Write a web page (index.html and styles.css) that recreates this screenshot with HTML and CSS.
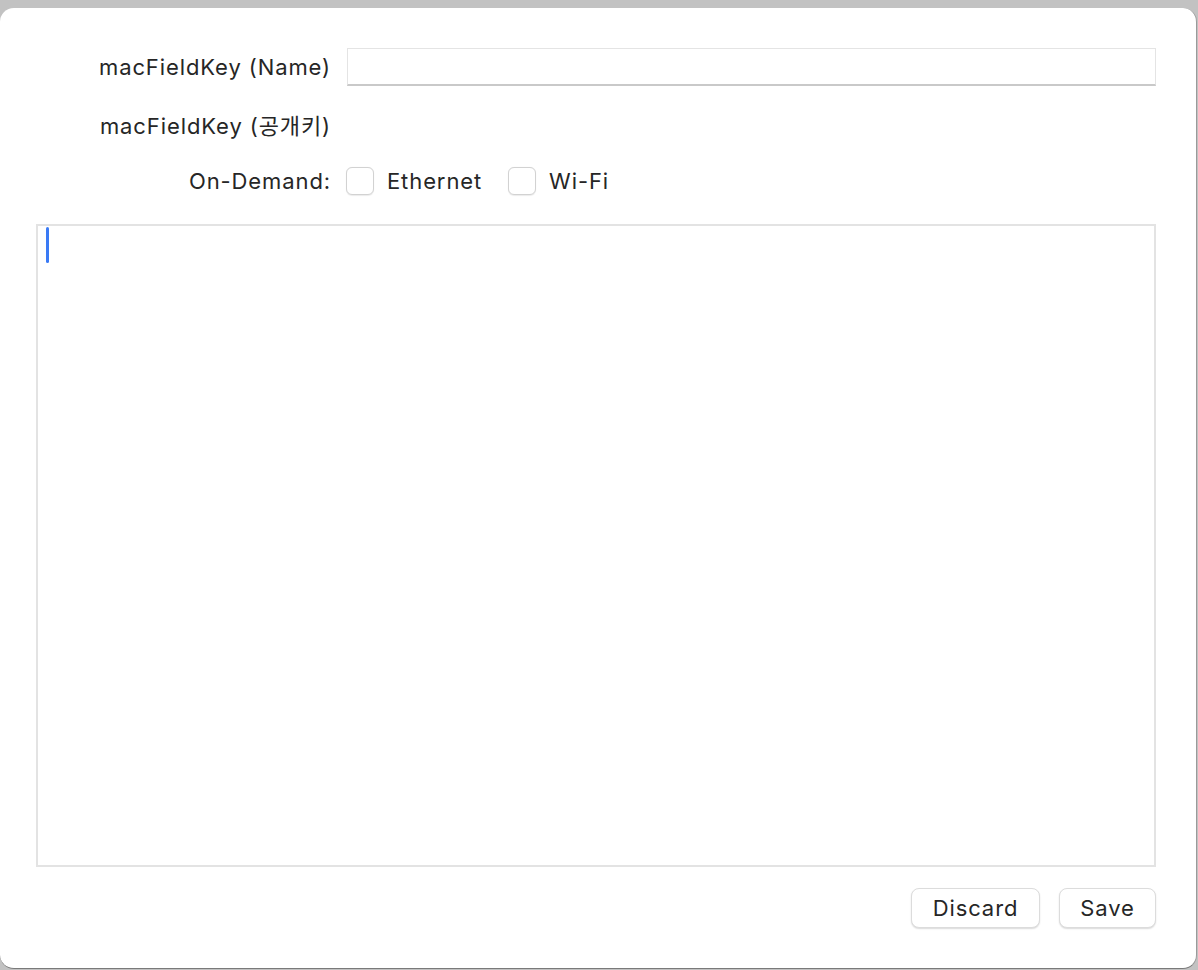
FILE: index.html
```html
<!DOCTYPE html>
<html>
<head>
<meta charset="utf-8">
<link rel="stylesheet" href="styles.css">
</head>
<body>
<div class="window">
  <div class="form">
    <div class="row">
      <div class="label">macFieldKey (Name)</div>
      <div class="field"></div>
    </div>
    <div class="row">
      <div class="label">macFieldKey (공개키)</div>
    </div>
    <div class="row">
      <div class="label">On-Demand:</div>
      <div class="checks">
        <span class="check"></span><span class="check-label">Ethernet</span>
        <span class="check"></span><span class="check-label">Wi-Fi</span>
      </div>
    </div>
  </div>
  <div class="editor"><div class="caret"></div></div>
  <div class="actions">
    <button class="btn btn-discard">Discard</button>
    <button class="btn btn-save">Save</button>
  </div>
</div>
</body>
</html>
```
FILE: styles.css
```css
html, body {
  margin: 0;
  padding: 0;
  background: #c2c2c2;
  height: 970px;
  overflow: hidden;
}
body {
  font-family: Inter, "Noto Sans CJK KR", sans-serif;
  color: #262626;
}
.window {
  box-sizing: border-box;
  margin-top: 8px;
  width: 1197px;
  height: 961px;
  background: #ffffff;
  border-radius: 14px;
  border-right: 1px solid #9a9a9a;
  border-bottom: 1px solid #7a7a7a;
  padding: 40px 40px 0 36px;
  display: flex;
  flex-direction: column;
}
.form {
  display: flex;
  flex-direction: column;
  gap: 19px;
}
.row {
  display: flex;
  align-items: center;
  height: 38px;
}
.label {
  width: 295px;
  text-align: right;
  font-size: 22px;
  letter-spacing: 0.9px;
  flex-shrink: 0;
  margin-right: -1px;
}
.field {
  box-sizing: border-box;
  margin-left: 17px;
  flex: 1;
  height: 38px;
  border: 1px solid #e4e4e4;
  border-bottom: 2px solid #c9c9c9;
  background: #fff;
}
.checks {
  display: flex;
  align-items: center;
  margin-left: 16px;
}
.check {
  box-sizing: border-box;
  width: 28px;
  height: 28px;
  border: 1px solid #d2d2d2;
  border-radius: 6px;
  background: #fff;
  box-shadow: 0 0.5px 1px rgba(0,0,0,0.08);
}
.check-label {
  font-size: 22px;
  letter-spacing: 0.9px;
  margin-left: 13px;
  margin-right: 26px;
}
.editor {
  box-sizing: border-box;
  margin-top: 24px;
  height: 643px;
  border: 2px solid #e3e3e3;
  padding: 1px 0 0 8px;
}
.caret {
  width: 3px;
  height: 36px;
  border-radius: 2px;
  background: #3a7af5;
}
.actions {
  display: flex;
  justify-content: flex-end;
  gap: 19px;
  margin-top: 21px;
}
.btn {
  box-sizing: border-box;
  height: 40px;
  border: 1px solid #dcdcdc;
  border-radius: 8px;
  background: #fff;
  box-shadow: 0 1px 1.5px rgba(0,0,0,0.15);
  font-family: Inter, sans-serif;
  font-size: 22px;
  letter-spacing: 0.9px;
  color: #262626;
  padding: 0;
}
.btn-discard { width: 129px; }
.btn-save { width: 97px; }
```
